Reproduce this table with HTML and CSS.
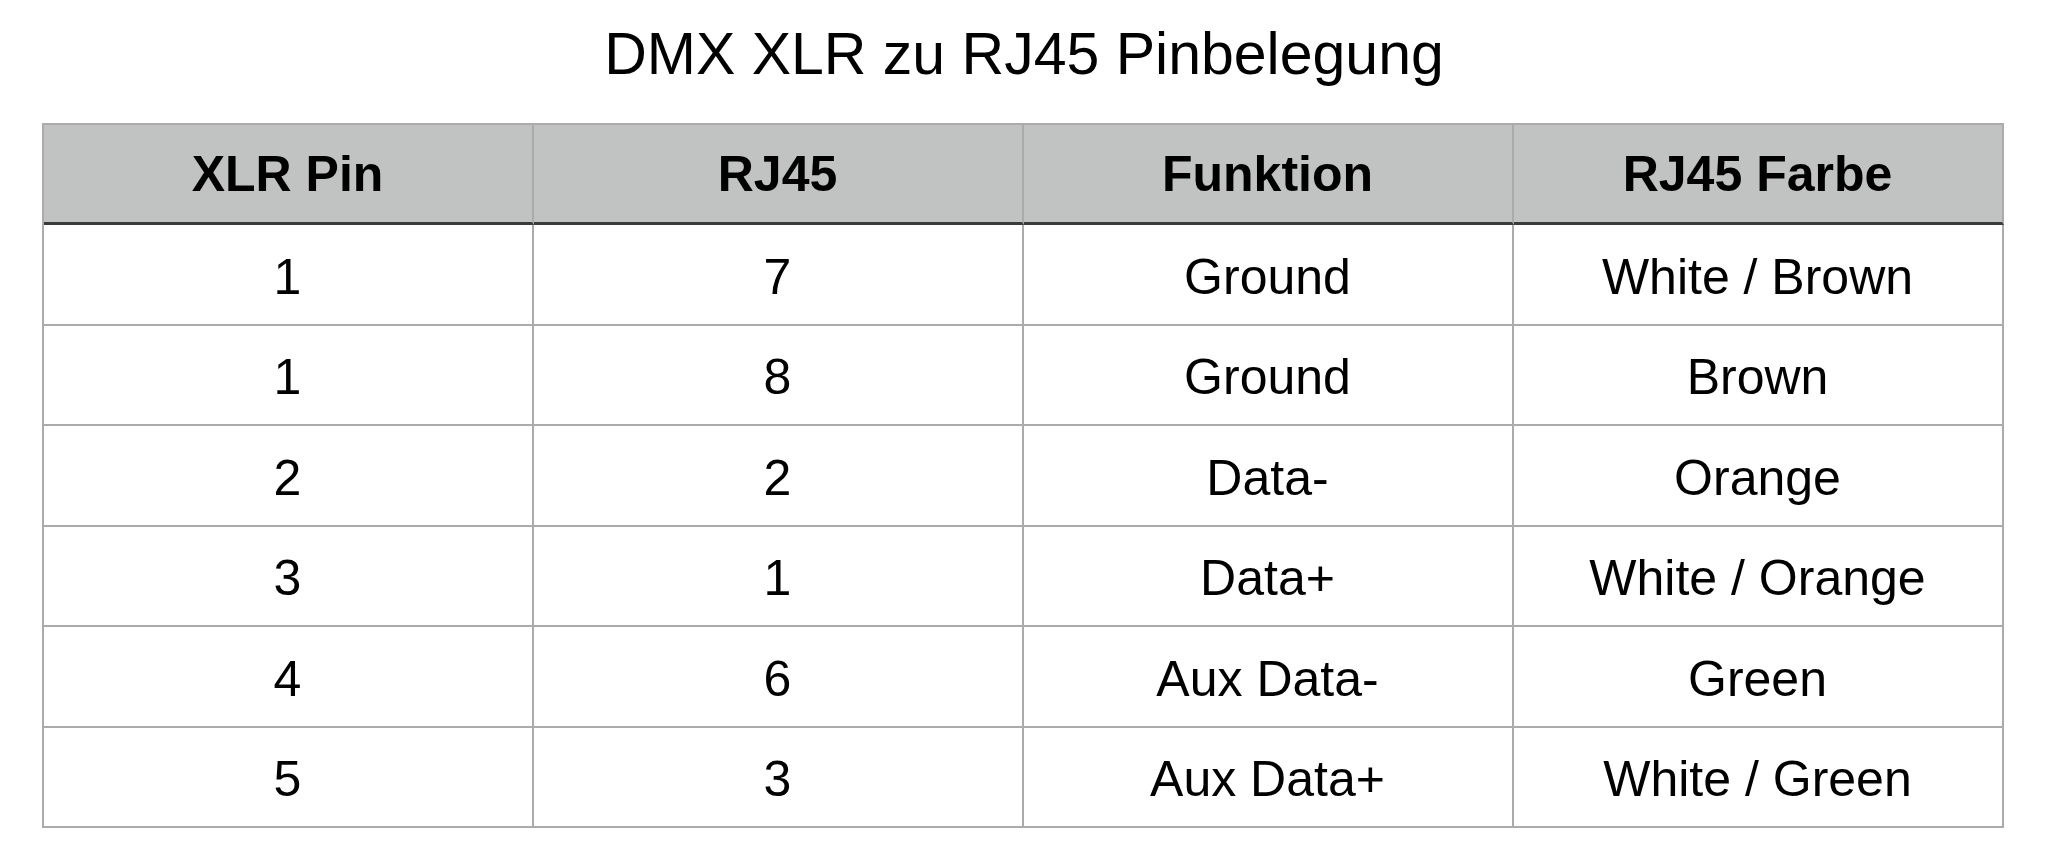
FILE: index.html
```html
<!DOCTYPE html>
<html lang="de">
<head>
<meta charset="utf-8">
<title>DMX XLR zu RJ45 Pinbelegung</title>
<link rel="stylesheet" href="styles.css">
</head>
<body>
<div class="page">
  <h1 class="title">DMX XLR zu RJ45 Pinbelegung</h1>
  <table class="pins">
    <thead>
      <tr><th>XLR Pin</th><th>RJ45</th><th>Funktion</th><th>RJ45 Farbe</th></tr>
    </thead>
    <tbody>
      <tr><td>1</td><td>7</td><td>Ground</td><td>White / Brown</td></tr>
      <tr><td>1</td><td>8</td><td>Ground</td><td>Brown</td></tr>
      <tr><td>2</td><td>2</td><td>Data-</td><td>Orange</td></tr>
      <tr><td>3</td><td>1</td><td>Data+</td><td>White / Orange</td></tr>
      <tr><td>4</td><td>6</td><td>Aux Data-</td><td>Green</td></tr>
      <tr><td>5</td><td>3</td><td>Aux Data+</td><td>White / Green</td></tr>
    </tbody>
  </table>
</div>
</body>
</html>
```

FILE: styles.css
```css
html, body {
  margin: 0;
  padding: 0;
  background: #ffffff;
}

body {
  font-family: "Liberation Sans", Arial, Helvetica, sans-serif;
  color: #000000;
}

.page {
  display: flex;
  flex-direction: column;
  align-items: center;
  padding-top: 20px;
}

.title {
  margin: 0 0 35px 0;
  font-size: 59px;
  font-weight: 400;
  line-height: 68px;
  text-align: center;
}

.pins {
  width: 1962px;
  margin-right: 3px;
  table-layout: fixed;
  border-collapse: separate;
  border-spacing: 0;
  border-top: 2px solid #ababab;
  border-left: 2px solid #ababab;
}

.pins th,
.pins td {
  padding: 0;
  text-align: center;
  vertical-align: middle;
  font-size: 50px;
  border-right: 2px solid #ababab;
  border-bottom: 2px solid #ababab;
}

.pins th {
  height: 97px;
  background: #c1c3c2;
  font-weight: 700;
  border-bottom: 3px solid #3b3b3b;
}

.pins td {
  height: 94px;
  padding-top: 4.5px;
  background: #ffffff;
}
```
